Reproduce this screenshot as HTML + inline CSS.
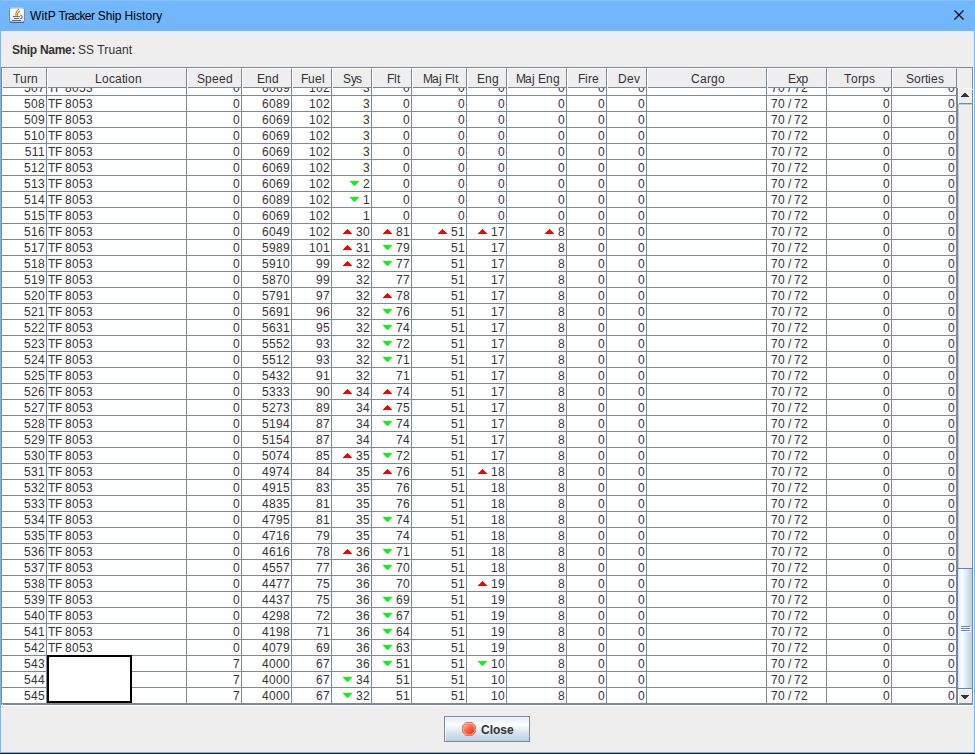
<!DOCTYPE html>
<html><head><meta charset="utf-8"><title>WitP Tracker Ship History</title>
<style>
html,body{margin:0;padding:0}
body{width:975px;height:754px;position:relative;overflow:hidden;background:#eee;font-family:"Liberation Sans",sans-serif;font-size:12px;color:#333}
div{box-sizing:border-box}
#tb{position:absolute;left:0;top:0;width:975px;height:31px;background:#72b6fc}
#tb .top{position:absolute;left:0;top:0;width:975px;height:1px;background:#86c0fb}
#bl,#br{position:absolute;top:0;width:1px;height:753px;background:#72b6fc}
#bl{left:0}#br{left:974px}
#bb{position:absolute;left:0;top:752px;width:975px;height:1px;background:#72b6fc}
#bk{position:absolute;left:0;top:753px;width:975px;height:1px;background:#1c1c1c}
#title span{position:absolute;top:0}
#title{position:absolute;left:30px;top:9px;font-size:12px;line-height:15px;color:#000;white-space:nowrap}
#ship b{letter-spacing:-0.28px}
#ship span{position:absolute;left:66px;top:0;letter-spacing:0.08px}
#ship{position:absolute;left:12px;top:43px;line-height:15px;white-space:nowrap}
#sp{position:absolute;left:1px;top:67px;width:972px;height:638px;border:1px solid #7a8a99}
#wr{position:absolute;left:973px;top:68px;width:1px;height:638px;background:#fff}
#wb{position:absolute;left:2px;top:705px;width:972px;height:1px;background:#fff}
#n1{position:absolute;left:972px;top:89px;width:1px;height:1px;background:#eee}
#n2{position:absolute;left:2px;top:704px;width:1px;height:1px;background:#eee}
#hd{position:absolute;left:2px;top:68px;width:955px;height:20px;display:flex;background:#eee}
.h{height:20px;border-top:1px solid #fff;border-left:1px solid #fff;border-right:1px solid #7a8a99;border-bottom:1px solid #7a8a99;text-align:center;line-height:15px;padding-top:3px;white-space:nowrap;position:relative}
.h span{position:absolute;top:3px;left:0;white-space:nowrap;line-height:15px}
.h i{display:inline-block;font-style:normal;text-align:left;white-space:nowrap}
.h:before{content:"";position:absolute;left:-1px;bottom:-1px;width:1px;height:1px;background:#eee}
#vp{position:absolute;left:2px;top:88px;width:955px;height:616px;overflow:hidden;background:#fff}
#tbl{position:absolute;left:0;top:-8px;width:955px}
.r{display:flex;height:16px}
.c{height:16px;border-right:1px solid #7a8a99;border-bottom:1px solid #7a8a99;padding:1px 1px 0 1px;text-align:right;line-height:15px;white-space:nowrap;position:relative}
.c{letter-spacing:0.3333px}
.c.l{text-align:left}
.t{letter-spacing:-0.3333px}
.c.e{text-align:left;padding-left:4px}
.c svg{position:absolute;top:5px;display:block}
.c svg.a2{right:19px}
.c svg.a1{right:12px}
.c svg.a3{right:26px}
#box{position:absolute;left:47px;top:655px;width:85px;height:48px;border:2px solid #000;background:#fff}
#sb{position:absolute;left:957px;top:88px;width:15px;height:616px;background:#eee}
#sb div{position:absolute}
#sb .l{left:0;top:0;width:1px;height:616px;background:#7a8a99}
#sb .u1{left:1px;top:0;width:14px;height:1px;background:#fff}
#sb .u2{left:1px;top:0;width:1px;height:16px;background:#fff}
#sb .u3{left:2px;top:15px;width:13px;height:1px;background:#7a8a99}
#sb .t1{left:1px;top:16px;width:14px;height:1px;background:#b8cfe5}
#sb .t2{left:1px;top:16px;width:1px;height:464px;background:#b8cfe5}
#sb .th{left:0;top:480px;width:15px;height:121px;background:linear-gradient(to right,#dde8f3 0%,#ffffff 30%,#dde8f3 60%,#b8cfe5 100%);border:1px solid #6382bf;border-right:none}
#sb .th i{position:absolute;left:3px;width:9px;height:1px;background:#6382bf}
#sb .th b{position:absolute;left:4px;width:9px;height:1px;background:#fff}
#sb .d1{left:1px;top:601px;width:14px;height:1px;background:#fff}
#sb .d2{left:1px;top:601px;width:1px;height:15px;background:#fff}
#sb .d3{left:2px;top:615px;width:13px;height:1px;background:#7a8a99}
#sb svg{position:absolute;left:4px}
#jicon{position:absolute;left:9px;top:7px}
#xbtn{position:absolute;left:953px;top:9px}
#close{position:absolute;left:444px;top:716px;width:86px;height:26px;border:1px solid #7a8a99;background:linear-gradient(to bottom,#dde8f3 0%,#ffffff 30%,#dde8f3 60%,#b8cfe5 100%);box-shadow:inset 1px 1px 0 rgba(255,255,255,.65)}
#close svg{position:absolute;left:17px;top:5px}
#close span{position:absolute;left:36px;top:6px;font-weight:bold;line-height:15px}
</style></head><body>
<div id="tb"><div class="top"></div></div>
<div id="title"><span style="left:0;letter-spacing:0.1px">WitP</span><span style="left:28.4px;letter-spacing:-0.62px">Tracker</span><span style="left:67.8px;letter-spacing:-0.16px">Ship</span><span style="left:94.4px;letter-spacing:0.1px">History</span></div>
<div id="ship"><b>Ship Name:</b><span>SS Truant</span></div>
<div id="sp"></div><div id="wr"></div><div id="wb"></div><div id="n1"></div><div id="n2"></div>
<div id="hd"><div class="h" style="width:45px"><span style="left:10px"><i style="width:7px">T</i><i style="width:7px">u</i><i style="width:4px">r</i><i style="width:7px">n</i></span></div><div class="h" style="width:140px"><span style="left:47px"><i style="width:7px">L</i><i style="width:7px">o</i><i style="width:6px">c</i><i style="width:7px">a</i><i style="width:3px">t</i><i style="width:3px">i</i><i style="width:7px">o</i><i style="width:7px">n</i></span></div><div class="h" style="width:55px"><span style="left:9px"><i style="width:8px">S</i><i style="width:7px">p</i><i style="width:7px">e</i><i style="width:7px">e</i><i style="width:7px">d</i></span></div><div class="h" style="width:50px"><span style="left:14px"><i style="width:8px">E</i><i style="width:7px">n</i><i style="width:7px">d</i></span></div><div class="h" style="width:40px"><span style="left:8px"><i style="width:7px">F</i><i style="width:7px">u</i><i style="width:7px">e</i><i style="width:3px">l</i></span></div><div class="h" style="width:40px"><span style="left:10px"><i style="width:8px">S</i><i style="width:5px">y</i><i style="width:7px">s</i></span></div><div class="h" style="width:40px"><span style="left:14px"><i style="width:7px">F</i><i style="width:3px">l</i><i style="width:3px">t</i></span></div><div class="h" style="width:55px"><span style="left:10px"><i style="width:9px">M</i><i style="width:7px">a</i><i style="width:3px">j</i><i style="width:3px">&nbsp;</i><i style="width:7px">F</i><i style="width:3px">l</i><i style="width:3px">t</i></span></div><div class="h" style="width:40px"><span style="left:9px"><i style="width:8px">E</i><i style="width:7px">n</i><i style="width:7px">g</i></span></div><div class="h" style="width:60px"><span style="left:8px"><i style="width:9px">M</i><i style="width:7px">a</i><i style="width:3px">j</i><i style="width:3px">&nbsp;</i><i style="width:8px">E</i><i style="width:7px">n</i><i style="width:7px">g</i></span></div><div class="h" style="width:40px"><span style="left:10px"><i style="width:7px">F</i><i style="width:3px">i</i><i style="width:4px">r</i><i style="width:7px">e</i></span></div><div class="h" style="width:40px"><span style="left:10px"><i style="width:9px">D</i><i style="width:7px">e</i><i style="width:5px">v</i></span></div><div class="h" style="width:120px"><span style="left:43px"><i style="width:9px">C</i><i style="width:7px">a</i><i style="width:4px">r</i><i style="width:7px">g</i><i style="width:7px">o</i></span></div><div class="h" style="width:60px"><span style="left:20px"><i style="width:8px">E</i><i style="width:5.6px">x</i><i style="width:7px">p</i></span></div><div class="h" style="width:65px"><span style="left:16px"><i style="width:7px">T</i><i style="width:7px">o</i><i style="width:4px">r</i><i style="width:7px">p</i><i style="width:7px">s</i></span></div><div class="h" style="width:65px"><span style="left:13px"><i style="width:8px">S</i><i style="width:7px">o</i><i style="width:4px">r</i><i style="width:3px">t</i><i style="width:3px">i</i><i style="width:7px">e</i><i style="width:7px">s</i></span></div></div>
<div id="vp"><div id="tbl">
<div class="r"><div class="c " style="width:45px">507</div><div class="c l" style="width:140px"><span class="t">TF </span>8053</div><div class="c " style="width:55px">0</div><div class="c " style="width:50px">6069</div><div class="c " style="width:40px">102</div><div class="c " style="width:40px">3</div><div class="c " style="width:40px">0</div><div class="c " style="width:55px">0</div><div class="c " style="width:40px">0</div><div class="c " style="width:60px">0</div><div class="c " style="width:40px">0</div><div class="c " style="width:40px">0</div><div class="c " style="width:120px"></div><div class="c e" style="width:60px">70<span class="t"> / </span>72</div><div class="c " style="width:65px">0</div><div class="c " style="width:65px">0</div></div>
<div class="r"><div class="c " style="width:45px">508</div><div class="c l" style="width:140px"><span class="t">TF </span>8053</div><div class="c " style="width:55px">0</div><div class="c " style="width:50px">6089</div><div class="c " style="width:40px">102</div><div class="c " style="width:40px">3</div><div class="c " style="width:40px">0</div><div class="c " style="width:55px">0</div><div class="c " style="width:40px">0</div><div class="c " style="width:60px">0</div><div class="c " style="width:40px">0</div><div class="c " style="width:40px">0</div><div class="c " style="width:120px"></div><div class="c e" style="width:60px">70<span class="t"> / </span>72</div><div class="c " style="width:65px">0</div><div class="c " style="width:65px">0</div></div>
<div class="r"><div class="c " style="width:45px">509</div><div class="c l" style="width:140px"><span class="t">TF </span>8053</div><div class="c " style="width:55px">0</div><div class="c " style="width:50px">6069</div><div class="c " style="width:40px">102</div><div class="c " style="width:40px">3</div><div class="c " style="width:40px">0</div><div class="c " style="width:55px">0</div><div class="c " style="width:40px">0</div><div class="c " style="width:60px">0</div><div class="c " style="width:40px">0</div><div class="c " style="width:40px">0</div><div class="c " style="width:120px"></div><div class="c e" style="width:60px">70<span class="t"> / </span>72</div><div class="c " style="width:65px">0</div><div class="c " style="width:65px">0</div></div>
<div class="r"><div class="c " style="width:45px">510</div><div class="c l" style="width:140px"><span class="t">TF </span>8053</div><div class="c " style="width:55px">0</div><div class="c " style="width:50px">6069</div><div class="c " style="width:40px">102</div><div class="c " style="width:40px">3</div><div class="c " style="width:40px">0</div><div class="c " style="width:55px">0</div><div class="c " style="width:40px">0</div><div class="c " style="width:60px">0</div><div class="c " style="width:40px">0</div><div class="c " style="width:40px">0</div><div class="c " style="width:120px"></div><div class="c e" style="width:60px">70<span class="t"> / </span>72</div><div class="c " style="width:65px">0</div><div class="c " style="width:65px">0</div></div>
<div class="r"><div class="c " style="width:45px">511</div><div class="c l" style="width:140px"><span class="t">TF </span>8053</div><div class="c " style="width:55px">0</div><div class="c " style="width:50px">6069</div><div class="c " style="width:40px">102</div><div class="c " style="width:40px">3</div><div class="c " style="width:40px">0</div><div class="c " style="width:55px">0</div><div class="c " style="width:40px">0</div><div class="c " style="width:60px">0</div><div class="c " style="width:40px">0</div><div class="c " style="width:40px">0</div><div class="c " style="width:120px"></div><div class="c e" style="width:60px">70<span class="t"> / </span>72</div><div class="c " style="width:65px">0</div><div class="c " style="width:65px">0</div></div>
<div class="r"><div class="c " style="width:45px">512</div><div class="c l" style="width:140px"><span class="t">TF </span>8053</div><div class="c " style="width:55px">0</div><div class="c " style="width:50px">6069</div><div class="c " style="width:40px">102</div><div class="c " style="width:40px">3</div><div class="c " style="width:40px">0</div><div class="c " style="width:55px">0</div><div class="c " style="width:40px">0</div><div class="c " style="width:60px">0</div><div class="c " style="width:40px">0</div><div class="c " style="width:40px">0</div><div class="c " style="width:120px"></div><div class="c e" style="width:60px">70<span class="t"> / </span>72</div><div class="c " style="width:65px">0</div><div class="c " style="width:65px">0</div></div>
<div class="r"><div class="c " style="width:45px">513</div><div class="c l" style="width:140px"><span class="t">TF </span>8053</div><div class="c " style="width:55px">0</div><div class="c " style="width:50px">6069</div><div class="c " style="width:40px">102</div><div class="c " style="width:40px"><svg class="a1" width="9" height="5" viewBox="0 0 9 5" shape-rendering="crispEdges"><path fill="#0f0" d="M0 0h9v1H8v1H7v1H6v1H5v1H4V4H3V3H2V2H1V1H0z"/></svg>2</div><div class="c " style="width:40px">0</div><div class="c " style="width:55px">0</div><div class="c " style="width:40px">0</div><div class="c " style="width:60px">0</div><div class="c " style="width:40px">0</div><div class="c " style="width:40px">0</div><div class="c " style="width:120px"></div><div class="c e" style="width:60px">70<span class="t"> / </span>72</div><div class="c " style="width:65px">0</div><div class="c " style="width:65px">0</div></div>
<div class="r"><div class="c " style="width:45px">514</div><div class="c l" style="width:140px"><span class="t">TF </span>8053</div><div class="c " style="width:55px">0</div><div class="c " style="width:50px">6089</div><div class="c " style="width:40px">102</div><div class="c " style="width:40px"><svg class="a1" width="9" height="5" viewBox="0 0 9 5" shape-rendering="crispEdges"><path fill="#0f0" d="M0 0h9v1H8v1H7v1H6v1H5v1H4V4H3V3H2V2H1V1H0z"/></svg>1</div><div class="c " style="width:40px">0</div><div class="c " style="width:55px">0</div><div class="c " style="width:40px">0</div><div class="c " style="width:60px">0</div><div class="c " style="width:40px">0</div><div class="c " style="width:40px">0</div><div class="c " style="width:120px"></div><div class="c e" style="width:60px">70<span class="t"> / </span>72</div><div class="c " style="width:65px">0</div><div class="c " style="width:65px">0</div></div>
<div class="r"><div class="c " style="width:45px">515</div><div class="c l" style="width:140px"><span class="t">TF </span>8053</div><div class="c " style="width:55px">0</div><div class="c " style="width:50px">6069</div><div class="c " style="width:40px">102</div><div class="c " style="width:40px">1</div><div class="c " style="width:40px">0</div><div class="c " style="width:55px">0</div><div class="c " style="width:40px">0</div><div class="c " style="width:60px">0</div><div class="c " style="width:40px">0</div><div class="c " style="width:40px">0</div><div class="c " style="width:120px"></div><div class="c e" style="width:60px">70<span class="t"> / </span>72</div><div class="c " style="width:65px">0</div><div class="c " style="width:65px">0</div></div>
<div class="r"><div class="c " style="width:45px">516</div><div class="c l" style="width:140px"><span class="t">TF </span>8053</div><div class="c " style="width:55px">0</div><div class="c " style="width:50px">6049</div><div class="c " style="width:40px">102</div><div class="c " style="width:40px"><svg class="a2" width="9" height="5" viewBox="0 0 9 5" shape-rendering="crispEdges"><path fill="#f00" d="M4 0h1v1h1v1h1v1h1v1h1v1H0V4h1V3h1V2h1V1h1z"/></svg>30</div><div class="c " style="width:40px"><svg class="a2" width="9" height="5" viewBox="0 0 9 5" shape-rendering="crispEdges"><path fill="#f00" d="M4 0h1v1h1v1h1v1h1v1h1v1H0V4h1V3h1V2h1V1h1z"/></svg>81</div><div class="c " style="width:55px"><svg class="a2" width="9" height="5" viewBox="0 0 9 5" shape-rendering="crispEdges"><path fill="#f00" d="M4 0h1v1h1v1h1v1h1v1h1v1H0V4h1V3h1V2h1V1h1z"/></svg>51</div><div class="c " style="width:40px"><svg class="a2" width="9" height="5" viewBox="0 0 9 5" shape-rendering="crispEdges"><path fill="#f00" d="M4 0h1v1h1v1h1v1h1v1h1v1H0V4h1V3h1V2h1V1h1z"/></svg>17</div><div class="c " style="width:60px"><svg class="a1" width="9" height="5" viewBox="0 0 9 5" shape-rendering="crispEdges"><path fill="#f00" d="M4 0h1v1h1v1h1v1h1v1h1v1H0V4h1V3h1V2h1V1h1z"/></svg>8</div><div class="c " style="width:40px">0</div><div class="c " style="width:40px">0</div><div class="c " style="width:120px"></div><div class="c e" style="width:60px">70<span class="t"> / </span>72</div><div class="c " style="width:65px">0</div><div class="c " style="width:65px">0</div></div>
<div class="r"><div class="c " style="width:45px">517</div><div class="c l" style="width:140px"><span class="t">TF </span>8053</div><div class="c " style="width:55px">0</div><div class="c " style="width:50px">5989</div><div class="c " style="width:40px">101</div><div class="c " style="width:40px"><svg class="a2" width="9" height="5" viewBox="0 0 9 5" shape-rendering="crispEdges"><path fill="#f00" d="M4 0h1v1h1v1h1v1h1v1h1v1H0V4h1V3h1V2h1V1h1z"/></svg>31</div><div class="c " style="width:40px"><svg class="a2" width="9" height="5" viewBox="0 0 9 5" shape-rendering="crispEdges"><path fill="#0f0" d="M0 0h9v1H8v1H7v1H6v1H5v1H4V4H3V3H2V2H1V1H0z"/></svg>79</div><div class="c " style="width:55px">51</div><div class="c " style="width:40px">17</div><div class="c " style="width:60px">8</div><div class="c " style="width:40px">0</div><div class="c " style="width:40px">0</div><div class="c " style="width:120px"></div><div class="c e" style="width:60px">70<span class="t"> / </span>72</div><div class="c " style="width:65px">0</div><div class="c " style="width:65px">0</div></div>
<div class="r"><div class="c " style="width:45px">518</div><div class="c l" style="width:140px"><span class="t">TF </span>8053</div><div class="c " style="width:55px">0</div><div class="c " style="width:50px">5910</div><div class="c " style="width:40px">99</div><div class="c " style="width:40px"><svg class="a2" width="9" height="5" viewBox="0 0 9 5" shape-rendering="crispEdges"><path fill="#f00" d="M4 0h1v1h1v1h1v1h1v1h1v1H0V4h1V3h1V2h1V1h1z"/></svg>32</div><div class="c " style="width:40px"><svg class="a2" width="9" height="5" viewBox="0 0 9 5" shape-rendering="crispEdges"><path fill="#0f0" d="M0 0h9v1H8v1H7v1H6v1H5v1H4V4H3V3H2V2H1V1H0z"/></svg>77</div><div class="c " style="width:55px">51</div><div class="c " style="width:40px">17</div><div class="c " style="width:60px">8</div><div class="c " style="width:40px">0</div><div class="c " style="width:40px">0</div><div class="c " style="width:120px"></div><div class="c e" style="width:60px">70<span class="t"> / </span>72</div><div class="c " style="width:65px">0</div><div class="c " style="width:65px">0</div></div>
<div class="r"><div class="c " style="width:45px">519</div><div class="c l" style="width:140px"><span class="t">TF </span>8053</div><div class="c " style="width:55px">0</div><div class="c " style="width:50px">5870</div><div class="c " style="width:40px">99</div><div class="c " style="width:40px">32</div><div class="c " style="width:40px">77</div><div class="c " style="width:55px">51</div><div class="c " style="width:40px">17</div><div class="c " style="width:60px">8</div><div class="c " style="width:40px">0</div><div class="c " style="width:40px">0</div><div class="c " style="width:120px"></div><div class="c e" style="width:60px">70<span class="t"> / </span>72</div><div class="c " style="width:65px">0</div><div class="c " style="width:65px">0</div></div>
<div class="r"><div class="c " style="width:45px">520</div><div class="c l" style="width:140px"><span class="t">TF </span>8053</div><div class="c " style="width:55px">0</div><div class="c " style="width:50px">5791</div><div class="c " style="width:40px">97</div><div class="c " style="width:40px">32</div><div class="c " style="width:40px"><svg class="a2" width="9" height="5" viewBox="0 0 9 5" shape-rendering="crispEdges"><path fill="#f00" d="M4 0h1v1h1v1h1v1h1v1h1v1H0V4h1V3h1V2h1V1h1z"/></svg>78</div><div class="c " style="width:55px">51</div><div class="c " style="width:40px">17</div><div class="c " style="width:60px">8</div><div class="c " style="width:40px">0</div><div class="c " style="width:40px">0</div><div class="c " style="width:120px"></div><div class="c e" style="width:60px">70<span class="t"> / </span>72</div><div class="c " style="width:65px">0</div><div class="c " style="width:65px">0</div></div>
<div class="r"><div class="c " style="width:45px">521</div><div class="c l" style="width:140px"><span class="t">TF </span>8053</div><div class="c " style="width:55px">0</div><div class="c " style="width:50px">5691</div><div class="c " style="width:40px">96</div><div class="c " style="width:40px">32</div><div class="c " style="width:40px"><svg class="a2" width="9" height="5" viewBox="0 0 9 5" shape-rendering="crispEdges"><path fill="#0f0" d="M0 0h9v1H8v1H7v1H6v1H5v1H4V4H3V3H2V2H1V1H0z"/></svg>76</div><div class="c " style="width:55px">51</div><div class="c " style="width:40px">17</div><div class="c " style="width:60px">8</div><div class="c " style="width:40px">0</div><div class="c " style="width:40px">0</div><div class="c " style="width:120px"></div><div class="c e" style="width:60px">70<span class="t"> / </span>72</div><div class="c " style="width:65px">0</div><div class="c " style="width:65px">0</div></div>
<div class="r"><div class="c " style="width:45px">522</div><div class="c l" style="width:140px"><span class="t">TF </span>8053</div><div class="c " style="width:55px">0</div><div class="c " style="width:50px">5631</div><div class="c " style="width:40px">95</div><div class="c " style="width:40px">32</div><div class="c " style="width:40px"><svg class="a2" width="9" height="5" viewBox="0 0 9 5" shape-rendering="crispEdges"><path fill="#0f0" d="M0 0h9v1H8v1H7v1H6v1H5v1H4V4H3V3H2V2H1V1H0z"/></svg>74</div><div class="c " style="width:55px">51</div><div class="c " style="width:40px">17</div><div class="c " style="width:60px">8</div><div class="c " style="width:40px">0</div><div class="c " style="width:40px">0</div><div class="c " style="width:120px"></div><div class="c e" style="width:60px">70<span class="t"> / </span>72</div><div class="c " style="width:65px">0</div><div class="c " style="width:65px">0</div></div>
<div class="r"><div class="c " style="width:45px">523</div><div class="c l" style="width:140px"><span class="t">TF </span>8053</div><div class="c " style="width:55px">0</div><div class="c " style="width:50px">5552</div><div class="c " style="width:40px">93</div><div class="c " style="width:40px">32</div><div class="c " style="width:40px"><svg class="a2" width="9" height="5" viewBox="0 0 9 5" shape-rendering="crispEdges"><path fill="#0f0" d="M0 0h9v1H8v1H7v1H6v1H5v1H4V4H3V3H2V2H1V1H0z"/></svg>72</div><div class="c " style="width:55px">51</div><div class="c " style="width:40px">17</div><div class="c " style="width:60px">8</div><div class="c " style="width:40px">0</div><div class="c " style="width:40px">0</div><div class="c " style="width:120px"></div><div class="c e" style="width:60px">70<span class="t"> / </span>72</div><div class="c " style="width:65px">0</div><div class="c " style="width:65px">0</div></div>
<div class="r"><div class="c " style="width:45px">524</div><div class="c l" style="width:140px"><span class="t">TF </span>8053</div><div class="c " style="width:55px">0</div><div class="c " style="width:50px">5512</div><div class="c " style="width:40px">93</div><div class="c " style="width:40px">32</div><div class="c " style="width:40px"><svg class="a2" width="9" height="5" viewBox="0 0 9 5" shape-rendering="crispEdges"><path fill="#0f0" d="M0 0h9v1H8v1H7v1H6v1H5v1H4V4H3V3H2V2H1V1H0z"/></svg>71</div><div class="c " style="width:55px">51</div><div class="c " style="width:40px">17</div><div class="c " style="width:60px">8</div><div class="c " style="width:40px">0</div><div class="c " style="width:40px">0</div><div class="c " style="width:120px"></div><div class="c e" style="width:60px">70<span class="t"> / </span>72</div><div class="c " style="width:65px">0</div><div class="c " style="width:65px">0</div></div>
<div class="r"><div class="c " style="width:45px">525</div><div class="c l" style="width:140px"><span class="t">TF </span>8053</div><div class="c " style="width:55px">0</div><div class="c " style="width:50px">5432</div><div class="c " style="width:40px">91</div><div class="c " style="width:40px">32</div><div class="c " style="width:40px">71</div><div class="c " style="width:55px">51</div><div class="c " style="width:40px">17</div><div class="c " style="width:60px">8</div><div class="c " style="width:40px">0</div><div class="c " style="width:40px">0</div><div class="c " style="width:120px"></div><div class="c e" style="width:60px">70<span class="t"> / </span>72</div><div class="c " style="width:65px">0</div><div class="c " style="width:65px">0</div></div>
<div class="r"><div class="c " style="width:45px">526</div><div class="c l" style="width:140px"><span class="t">TF </span>8053</div><div class="c " style="width:55px">0</div><div class="c " style="width:50px">5333</div><div class="c " style="width:40px">90</div><div class="c " style="width:40px"><svg class="a2" width="9" height="5" viewBox="0 0 9 5" shape-rendering="crispEdges"><path fill="#f00" d="M4 0h1v1h1v1h1v1h1v1h1v1H0V4h1V3h1V2h1V1h1z"/></svg>34</div><div class="c " style="width:40px"><svg class="a2" width="9" height="5" viewBox="0 0 9 5" shape-rendering="crispEdges"><path fill="#f00" d="M4 0h1v1h1v1h1v1h1v1h1v1H0V4h1V3h1V2h1V1h1z"/></svg>74</div><div class="c " style="width:55px">51</div><div class="c " style="width:40px">17</div><div class="c " style="width:60px">8</div><div class="c " style="width:40px">0</div><div class="c " style="width:40px">0</div><div class="c " style="width:120px"></div><div class="c e" style="width:60px">70<span class="t"> / </span>72</div><div class="c " style="width:65px">0</div><div class="c " style="width:65px">0</div></div>
<div class="r"><div class="c " style="width:45px">527</div><div class="c l" style="width:140px"><span class="t">TF </span>8053</div><div class="c " style="width:55px">0</div><div class="c " style="width:50px">5273</div><div class="c " style="width:40px">89</div><div class="c " style="width:40px">34</div><div class="c " style="width:40px"><svg class="a2" width="9" height="5" viewBox="0 0 9 5" shape-rendering="crispEdges"><path fill="#f00" d="M4 0h1v1h1v1h1v1h1v1h1v1H0V4h1V3h1V2h1V1h1z"/></svg>75</div><div class="c " style="width:55px">51</div><div class="c " style="width:40px">17</div><div class="c " style="width:60px">8</div><div class="c " style="width:40px">0</div><div class="c " style="width:40px">0</div><div class="c " style="width:120px"></div><div class="c e" style="width:60px">70<span class="t"> / </span>72</div><div class="c " style="width:65px">0</div><div class="c " style="width:65px">0</div></div>
<div class="r"><div class="c " style="width:45px">528</div><div class="c l" style="width:140px"><span class="t">TF </span>8053</div><div class="c " style="width:55px">0</div><div class="c " style="width:50px">5194</div><div class="c " style="width:40px">87</div><div class="c " style="width:40px">34</div><div class="c " style="width:40px"><svg class="a2" width="9" height="5" viewBox="0 0 9 5" shape-rendering="crispEdges"><path fill="#0f0" d="M0 0h9v1H8v1H7v1H6v1H5v1H4V4H3V3H2V2H1V1H0z"/></svg>74</div><div class="c " style="width:55px">51</div><div class="c " style="width:40px">17</div><div class="c " style="width:60px">8</div><div class="c " style="width:40px">0</div><div class="c " style="width:40px">0</div><div class="c " style="width:120px"></div><div class="c e" style="width:60px">70<span class="t"> / </span>72</div><div class="c " style="width:65px">0</div><div class="c " style="width:65px">0</div></div>
<div class="r"><div class="c " style="width:45px">529</div><div class="c l" style="width:140px"><span class="t">TF </span>8053</div><div class="c " style="width:55px">0</div><div class="c " style="width:50px">5154</div><div class="c " style="width:40px">87</div><div class="c " style="width:40px">34</div><div class="c " style="width:40px">74</div><div class="c " style="width:55px">51</div><div class="c " style="width:40px">17</div><div class="c " style="width:60px">8</div><div class="c " style="width:40px">0</div><div class="c " style="width:40px">0</div><div class="c " style="width:120px"></div><div class="c e" style="width:60px">70<span class="t"> / </span>72</div><div class="c " style="width:65px">0</div><div class="c " style="width:65px">0</div></div>
<div class="r"><div class="c " style="width:45px">530</div><div class="c l" style="width:140px"><span class="t">TF </span>8053</div><div class="c " style="width:55px">0</div><div class="c " style="width:50px">5074</div><div class="c " style="width:40px">85</div><div class="c " style="width:40px"><svg class="a2" width="9" height="5" viewBox="0 0 9 5" shape-rendering="crispEdges"><path fill="#f00" d="M4 0h1v1h1v1h1v1h1v1h1v1H0V4h1V3h1V2h1V1h1z"/></svg>35</div><div class="c " style="width:40px"><svg class="a2" width="9" height="5" viewBox="0 0 9 5" shape-rendering="crispEdges"><path fill="#0f0" d="M0 0h9v1H8v1H7v1H6v1H5v1H4V4H3V3H2V2H1V1H0z"/></svg>72</div><div class="c " style="width:55px">51</div><div class="c " style="width:40px">17</div><div class="c " style="width:60px">8</div><div class="c " style="width:40px">0</div><div class="c " style="width:40px">0</div><div class="c " style="width:120px"></div><div class="c e" style="width:60px">70<span class="t"> / </span>72</div><div class="c " style="width:65px">0</div><div class="c " style="width:65px">0</div></div>
<div class="r"><div class="c " style="width:45px">531</div><div class="c l" style="width:140px"><span class="t">TF </span>8053</div><div class="c " style="width:55px">0</div><div class="c " style="width:50px">4974</div><div class="c " style="width:40px">84</div><div class="c " style="width:40px">35</div><div class="c " style="width:40px"><svg class="a2" width="9" height="5" viewBox="0 0 9 5" shape-rendering="crispEdges"><path fill="#f00" d="M4 0h1v1h1v1h1v1h1v1h1v1H0V4h1V3h1V2h1V1h1z"/></svg>76</div><div class="c " style="width:55px">51</div><div class="c " style="width:40px"><svg class="a2" width="9" height="5" viewBox="0 0 9 5" shape-rendering="crispEdges"><path fill="#f00" d="M4 0h1v1h1v1h1v1h1v1h1v1H0V4h1V3h1V2h1V1h1z"/></svg>18</div><div class="c " style="width:60px">8</div><div class="c " style="width:40px">0</div><div class="c " style="width:40px">0</div><div class="c " style="width:120px"></div><div class="c e" style="width:60px">70<span class="t"> / </span>72</div><div class="c " style="width:65px">0</div><div class="c " style="width:65px">0</div></div>
<div class="r"><div class="c " style="width:45px">532</div><div class="c l" style="width:140px"><span class="t">TF </span>8053</div><div class="c " style="width:55px">0</div><div class="c " style="width:50px">4915</div><div class="c " style="width:40px">83</div><div class="c " style="width:40px">35</div><div class="c " style="width:40px">76</div><div class="c " style="width:55px">51</div><div class="c " style="width:40px">18</div><div class="c " style="width:60px">8</div><div class="c " style="width:40px">0</div><div class="c " style="width:40px">0</div><div class="c " style="width:120px"></div><div class="c e" style="width:60px">70<span class="t"> / </span>72</div><div class="c " style="width:65px">0</div><div class="c " style="width:65px">0</div></div>
<div class="r"><div class="c " style="width:45px">533</div><div class="c l" style="width:140px"><span class="t">TF </span>8053</div><div class="c " style="width:55px">0</div><div class="c " style="width:50px">4835</div><div class="c " style="width:40px">81</div><div class="c " style="width:40px">35</div><div class="c " style="width:40px">76</div><div class="c " style="width:55px">51</div><div class="c " style="width:40px">18</div><div class="c " style="width:60px">8</div><div class="c " style="width:40px">0</div><div class="c " style="width:40px">0</div><div class="c " style="width:120px"></div><div class="c e" style="width:60px">70<span class="t"> / </span>72</div><div class="c " style="width:65px">0</div><div class="c " style="width:65px">0</div></div>
<div class="r"><div class="c " style="width:45px">534</div><div class="c l" style="width:140px"><span class="t">TF </span>8053</div><div class="c " style="width:55px">0</div><div class="c " style="width:50px">4795</div><div class="c " style="width:40px">81</div><div class="c " style="width:40px">35</div><div class="c " style="width:40px"><svg class="a2" width="9" height="5" viewBox="0 0 9 5" shape-rendering="crispEdges"><path fill="#0f0" d="M0 0h9v1H8v1H7v1H6v1H5v1H4V4H3V3H2V2H1V1H0z"/></svg>74</div><div class="c " style="width:55px">51</div><div class="c " style="width:40px">18</div><div class="c " style="width:60px">8</div><div class="c " style="width:40px">0</div><div class="c " style="width:40px">0</div><div class="c " style="width:120px"></div><div class="c e" style="width:60px">70<span class="t"> / </span>72</div><div class="c " style="width:65px">0</div><div class="c " style="width:65px">0</div></div>
<div class="r"><div class="c " style="width:45px">535</div><div class="c l" style="width:140px"><span class="t">TF </span>8053</div><div class="c " style="width:55px">0</div><div class="c " style="width:50px">4716</div><div class="c " style="width:40px">79</div><div class="c " style="width:40px">35</div><div class="c " style="width:40px">74</div><div class="c " style="width:55px">51</div><div class="c " style="width:40px">18</div><div class="c " style="width:60px">8</div><div class="c " style="width:40px">0</div><div class="c " style="width:40px">0</div><div class="c " style="width:120px"></div><div class="c e" style="width:60px">70<span class="t"> / </span>72</div><div class="c " style="width:65px">0</div><div class="c " style="width:65px">0</div></div>
<div class="r"><div class="c " style="width:45px">536</div><div class="c l" style="width:140px"><span class="t">TF </span>8053</div><div class="c " style="width:55px">0</div><div class="c " style="width:50px">4616</div><div class="c " style="width:40px">78</div><div class="c " style="width:40px"><svg class="a2" width="9" height="5" viewBox="0 0 9 5" shape-rendering="crispEdges"><path fill="#f00" d="M4 0h1v1h1v1h1v1h1v1h1v1H0V4h1V3h1V2h1V1h1z"/></svg>36</div><div class="c " style="width:40px"><svg class="a2" width="9" height="5" viewBox="0 0 9 5" shape-rendering="crispEdges"><path fill="#0f0" d="M0 0h9v1H8v1H7v1H6v1H5v1H4V4H3V3H2V2H1V1H0z"/></svg>71</div><div class="c " style="width:55px">51</div><div class="c " style="width:40px">18</div><div class="c " style="width:60px">8</div><div class="c " style="width:40px">0</div><div class="c " style="width:40px">0</div><div class="c " style="width:120px"></div><div class="c e" style="width:60px">70<span class="t"> / </span>72</div><div class="c " style="width:65px">0</div><div class="c " style="width:65px">0</div></div>
<div class="r"><div class="c " style="width:45px">537</div><div class="c l" style="width:140px"><span class="t">TF </span>8053</div><div class="c " style="width:55px">0</div><div class="c " style="width:50px">4557</div><div class="c " style="width:40px">77</div><div class="c " style="width:40px">36</div><div class="c " style="width:40px"><svg class="a2" width="9" height="5" viewBox="0 0 9 5" shape-rendering="crispEdges"><path fill="#0f0" d="M0 0h9v1H8v1H7v1H6v1H5v1H4V4H3V3H2V2H1V1H0z"/></svg>70</div><div class="c " style="width:55px">51</div><div class="c " style="width:40px">18</div><div class="c " style="width:60px">8</div><div class="c " style="width:40px">0</div><div class="c " style="width:40px">0</div><div class="c " style="width:120px"></div><div class="c e" style="width:60px">70<span class="t"> / </span>72</div><div class="c " style="width:65px">0</div><div class="c " style="width:65px">0</div></div>
<div class="r"><div class="c " style="width:45px">538</div><div class="c l" style="width:140px"><span class="t">TF </span>8053</div><div class="c " style="width:55px">0</div><div class="c " style="width:50px">4477</div><div class="c " style="width:40px">75</div><div class="c " style="width:40px">36</div><div class="c " style="width:40px">70</div><div class="c " style="width:55px">51</div><div class="c " style="width:40px"><svg class="a2" width="9" height="5" viewBox="0 0 9 5" shape-rendering="crispEdges"><path fill="#f00" d="M4 0h1v1h1v1h1v1h1v1h1v1H0V4h1V3h1V2h1V1h1z"/></svg>19</div><div class="c " style="width:60px">8</div><div class="c " style="width:40px">0</div><div class="c " style="width:40px">0</div><div class="c " style="width:120px"></div><div class="c e" style="width:60px">70<span class="t"> / </span>72</div><div class="c " style="width:65px">0</div><div class="c " style="width:65px">0</div></div>
<div class="r"><div class="c " style="width:45px">539</div><div class="c l" style="width:140px"><span class="t">TF </span>8053</div><div class="c " style="width:55px">0</div><div class="c " style="width:50px">4437</div><div class="c " style="width:40px">75</div><div class="c " style="width:40px">36</div><div class="c " style="width:40px"><svg class="a2" width="9" height="5" viewBox="0 0 9 5" shape-rendering="crispEdges"><path fill="#0f0" d="M0 0h9v1H8v1H7v1H6v1H5v1H4V4H3V3H2V2H1V1H0z"/></svg>69</div><div class="c " style="width:55px">51</div><div class="c " style="width:40px">19</div><div class="c " style="width:60px">8</div><div class="c " style="width:40px">0</div><div class="c " style="width:40px">0</div><div class="c " style="width:120px"></div><div class="c e" style="width:60px">70<span class="t"> / </span>72</div><div class="c " style="width:65px">0</div><div class="c " style="width:65px">0</div></div>
<div class="r"><div class="c " style="width:45px">540</div><div class="c l" style="width:140px"><span class="t">TF </span>8053</div><div class="c " style="width:55px">0</div><div class="c " style="width:50px">4298</div><div class="c " style="width:40px">72</div><div class="c " style="width:40px">36</div><div class="c " style="width:40px"><svg class="a2" width="9" height="5" viewBox="0 0 9 5" shape-rendering="crispEdges"><path fill="#0f0" d="M0 0h9v1H8v1H7v1H6v1H5v1H4V4H3V3H2V2H1V1H0z"/></svg>67</div><div class="c " style="width:55px">51</div><div class="c " style="width:40px">19</div><div class="c " style="width:60px">8</div><div class="c " style="width:40px">0</div><div class="c " style="width:40px">0</div><div class="c " style="width:120px"></div><div class="c e" style="width:60px">70<span class="t"> / </span>72</div><div class="c " style="width:65px">0</div><div class="c " style="width:65px">0</div></div>
<div class="r"><div class="c " style="width:45px">541</div><div class="c l" style="width:140px"><span class="t">TF </span>8053</div><div class="c " style="width:55px">0</div><div class="c " style="width:50px">4198</div><div class="c " style="width:40px">71</div><div class="c " style="width:40px">36</div><div class="c " style="width:40px"><svg class="a2" width="9" height="5" viewBox="0 0 9 5" shape-rendering="crispEdges"><path fill="#0f0" d="M0 0h9v1H8v1H7v1H6v1H5v1H4V4H3V3H2V2H1V1H0z"/></svg>64</div><div class="c " style="width:55px">51</div><div class="c " style="width:40px">19</div><div class="c " style="width:60px">8</div><div class="c " style="width:40px">0</div><div class="c " style="width:40px">0</div><div class="c " style="width:120px"></div><div class="c e" style="width:60px">70<span class="t"> / </span>72</div><div class="c " style="width:65px">0</div><div class="c " style="width:65px">0</div></div>
<div class="r"><div class="c " style="width:45px">542</div><div class="c l" style="width:140px"><span class="t">TF </span>8053</div><div class="c " style="width:55px">0</div><div class="c " style="width:50px">4079</div><div class="c " style="width:40px">69</div><div class="c " style="width:40px">36</div><div class="c " style="width:40px"><svg class="a2" width="9" height="5" viewBox="0 0 9 5" shape-rendering="crispEdges"><path fill="#0f0" d="M0 0h9v1H8v1H7v1H6v1H5v1H4V4H3V3H2V2H1V1H0z"/></svg>63</div><div class="c " style="width:55px">51</div><div class="c " style="width:40px">19</div><div class="c " style="width:60px">8</div><div class="c " style="width:40px">0</div><div class="c " style="width:40px">0</div><div class="c " style="width:120px"></div><div class="c e" style="width:60px">70<span class="t"> / </span>72</div><div class="c " style="width:65px">0</div><div class="c " style="width:65px">0</div></div>
<div class="r"><div class="c " style="width:45px">543</div><div class="c l" style="width:140px"></div><div class="c " style="width:55px">7</div><div class="c " style="width:50px">4000</div><div class="c " style="width:40px">67</div><div class="c " style="width:40px">36</div><div class="c " style="width:40px"><svg class="a2" width="9" height="5" viewBox="0 0 9 5" shape-rendering="crispEdges"><path fill="#0f0" d="M0 0h9v1H8v1H7v1H6v1H5v1H4V4H3V3H2V2H1V1H0z"/></svg>51</div><div class="c " style="width:55px">51</div><div class="c " style="width:40px"><svg class="a2" width="9" height="5" viewBox="0 0 9 5" shape-rendering="crispEdges"><path fill="#0f0" d="M0 0h9v1H8v1H7v1H6v1H5v1H4V4H3V3H2V2H1V1H0z"/></svg>10</div><div class="c " style="width:60px">8</div><div class="c " style="width:40px">0</div><div class="c " style="width:40px">0</div><div class="c " style="width:120px"></div><div class="c e" style="width:60px">70<span class="t"> / </span>72</div><div class="c " style="width:65px">0</div><div class="c " style="width:65px">0</div></div>
<div class="r"><div class="c " style="width:45px">544</div><div class="c l" style="width:140px"></div><div class="c " style="width:55px">7</div><div class="c " style="width:50px">4000</div><div class="c " style="width:40px">67</div><div class="c " style="width:40px"><svg class="a2" width="9" height="5" viewBox="0 0 9 5" shape-rendering="crispEdges"><path fill="#0f0" d="M0 0h9v1H8v1H7v1H6v1H5v1H4V4H3V3H2V2H1V1H0z"/></svg>34</div><div class="c " style="width:40px">51</div><div class="c " style="width:55px">51</div><div class="c " style="width:40px">10</div><div class="c " style="width:60px">8</div><div class="c " style="width:40px">0</div><div class="c " style="width:40px">0</div><div class="c " style="width:120px"></div><div class="c e" style="width:60px">70<span class="t"> / </span>72</div><div class="c " style="width:65px">0</div><div class="c " style="width:65px">0</div></div>
<div class="r"><div class="c " style="width:45px">545</div><div class="c l" style="width:140px"></div><div class="c " style="width:55px">7</div><div class="c " style="width:50px">4000</div><div class="c " style="width:40px">67</div><div class="c " style="width:40px"><svg class="a2" width="9" height="5" viewBox="0 0 9 5" shape-rendering="crispEdges"><path fill="#0f0" d="M0 0h9v1H8v1H7v1H6v1H5v1H4V4H3V3H2V2H1V1H0z"/></svg>32</div><div class="c " style="width:40px">51</div><div class="c " style="width:55px">51</div><div class="c " style="width:40px">10</div><div class="c " style="width:60px">8</div><div class="c " style="width:40px">0</div><div class="c " style="width:40px">0</div><div class="c " style="width:120px"></div><div class="c e" style="width:60px">70<span class="t"> / </span>72</div><div class="c " style="width:65px">0</div><div class="c " style="width:65px">0</div></div>
</div></div>
<div id="box"></div>
<div id="sb"><div class="l"></div><div class="u1"></div><div class="u2"></div><div class="u3"></div>
<svg style="top:5px" width="8" height="4" viewBox="0 0 8 4" shape-rendering="crispEdges"><path fill="#333" d="M3 0h2v1h1v1h1v1h1v1H0V3h1V2h1V1h1z"/></svg>
<div class="t1"></div><div class="t2"></div>
<div class="th"><i style="top:57px"></i><b style="top:58px"></b><i style="top:59px"></i><b style="top:60px"></b><i style="top:61px"></i><b style="top:62px"></b></div>
<div class="d1"></div><div class="d2"></div><div class="d3"></div>
<svg style="top:607px" width="8" height="4" viewBox="0 0 8 4" shape-rendering="crispEdges"><path fill="#333" d="M0 0h8v1H7v1H6v1H5v1H3V3H2V2H1V1H0z"/></svg>
</div>
<svg id="jicon" width="16" height="16" viewBox="0 0 16 16">
<defs><linearGradient id="jg" x1="0" y1="0" x2="0" y2="1"><stop offset="0" stop-color="#ffffff"/><stop offset="1" stop-color="#e6e6e6"/></linearGradient></defs>
<rect x="0.5" y="1" width="15" height="14.5" rx="1.8" fill="url(#jg)" stroke="#6d8fb3" stroke-width="1"/>
<path d="M1.5 1h13" stroke="#dbe6f2" stroke-width="1"/>
<path d="M1 15.3h14" stroke="#3f5f80" stroke-width="1.2"/>
<path d="M9.6 2.4C7 4.4 6.4 6 7 8.6M10.6 4.2C8.6 5.6 8 6.8 8.2 8.4" fill="none" stroke="#e8730f" stroke-width="1.05" stroke-linecap="round"/>
<path d="M4 9.5h6.8M5 11.5h4.8M3 13.5h9" fill="none" stroke="#4f7396" stroke-width="1"/>
<path d="M11.3 8.2c2.6 0.2 2.6 3.2 0 3.5" fill="none" stroke="#4f7396" stroke-width="1.1"/>
</svg>
<svg id="xbtn" width="12" height="12" viewBox="0 0 12 12"><path d="M1.5 1.5l9 9M10.5 1.5l-9 9" stroke="#000" stroke-width="1.1" fill="none"/></svg>
<div id="close"><svg width="14" height="14" viewBox="0 0 14 14"><defs><linearGradient id="rg" x1="0.15" y1="0.1" x2="0.85" y2="0.95"><stop offset="0" stop-color="#ff9c84"/><stop offset="1" stop-color="#ff2a08"/></linearGradient></defs>
<polygon points="4,0 10,0 14,4 14,10 10,14 4,14 0,10 0,4" fill="#ec6c5c"/>
<polygon points="4.4,1 9.6,1 13,4.4 13,9.6 9.6,13 4.4,13 1,9.6 1,4.4" fill="#fbb0a0"/>
<polygon points="4.8,1.8 9.2,1.8 12.2,4.8 12.2,9.2 9.2,12.2 4.8,12.2 1.8,9.2 1.8,4.8" fill="url(#rg)"/>
</svg><span>Close</span></div>
<div id="bl"></div><div id="br"></div><div id="bb"></div><div id="bk"></div>
</body></html>
